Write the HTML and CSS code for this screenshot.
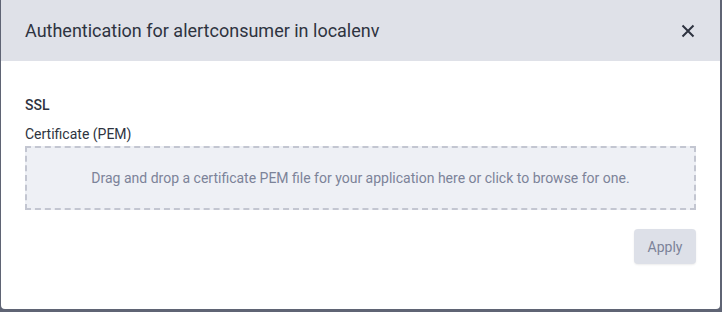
FILE: index.html
```html
<!DOCTYPE html>
<html lang="en">

<head>
    <meta charset="UTF-8">
    <meta name="viewport" content="width=device-width, initial-scale=1.0">
    <title>Authentication</title>
    <link rel="stylesheet" href="styles.css">
</head>

<body>
    <div class="dialog">
        <div class="dialog-header">
            <h2 class="dialog-title">Authentication for alertconsumer in localenv</h2>
            <span class="dialog-close">
                <svg width="14" height="14" viewBox="0 0 14 14">
                    <path d="M1.5 1.5 L12.5 12.5 M12.5 1.5 L1.5 12.5" stroke="#2e3340" stroke-width="2" fill="none" />
                </svg>
            </span>
        </div>
        <div class="dialog-body">
            <div class="section-title">SSL</div>
            <label class="field-label">Certificate (PEM)</label>
            <div class="dropzone">Drag and drop a certificate PEM file for your application here or click to browse for one.</div>
            <div class="dialog-actions">
                <button class="apply-btn" disabled>Apply</button>
            </div>
        </div>
    </div>
</body>

</html>
```

FILE: styles.css
```css
body {
    margin: 0;
    background-color: #5f6474;
    font-family: Roboto, "Liberation Sans", sans-serif;
}

.dialog {
    margin-left: 1px;
    width: 719px;
    height: 309px;
    background: #ffffff;
    border-radius: 0 0 4px 4px;
    overflow: hidden;
}

.dialog-header {
    height: 61px;
    background: #dfe1e8;
    display: flex;
    align-items: center;
    justify-content: space-between;
    padding: 0 25px 0 24px;
    box-sizing: border-box;
}

.dialog-title {
    margin: 0;
    font-size: 18px;
    font-weight: 400;
    color: #2e3340;
}

.dialog-close {
    display: flex;
    cursor: pointer;
}

.dialog-body {
    padding: 36px 24px 0 24px;
}

.section-title {
    font-size: 14px;
    font-weight: 500;
    color: #2e3340;
    margin-bottom: 13px;
}

.field-label {
    display: block;
    font-size: 14px;
    color: #2e3340;
    margin-bottom: 4px;
}

.dropzone {
    height: 64px;
    box-sizing: border-box;
    border: 2px dashed #c3c6d1;
    background: #eef0f5;
    color: #7c8399;
    font-size: 14px;
    display: flex;
    align-items: center;
    justify-content: center;
    cursor: pointer;
}

.dialog-actions {
    display: flex;
    justify-content: flex-end;
    margin-top: 19px;
}

.apply-btn {
    width: 62px;
    height: 35px;
    border: none;
    border-radius: 4px;
    background: #dde0e8;
    color: #7c8399;
    font-family: inherit;
    font-size: 14px;
    box-shadow: 0 1px 2px rgba(0, 0, 0, 0.08);
}
```
